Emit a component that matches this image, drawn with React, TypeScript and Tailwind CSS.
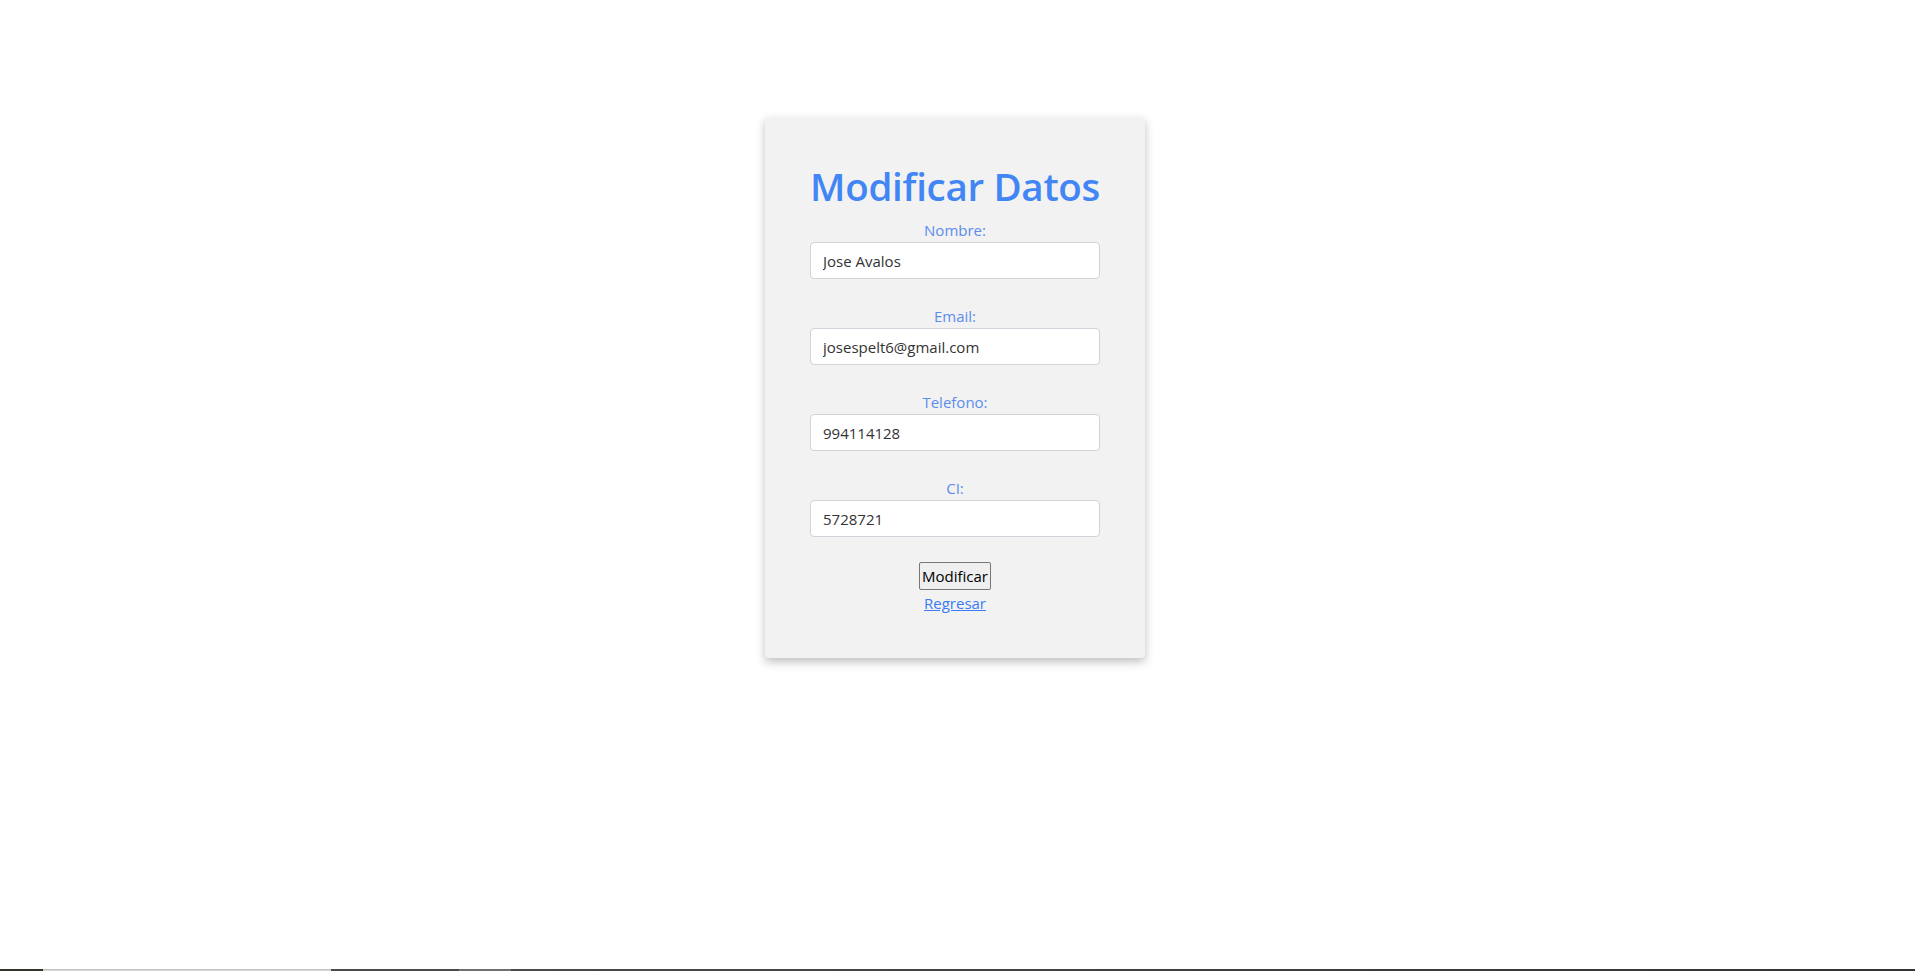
import { useState } from 'react';

const fields = [
  { id: 'nombre', label: 'Nombre:', value: 'Jose Avalos' },
  { id: 'email', label: 'Email:', value: 'josespelt6@gmail.com' },
  { id: 'telefono', label: 'Telefono:', value: '994114128' },
  { id: 'ci', label: 'CI:', value: '5728721' },
];

export default function App() {
  const [values, setValues] = useState<Record<string, string>>(
    Object.fromEntries(fields.map((f) => [f.id, f.value]))
  );

  return (
    <div className="min-h-screen flex flex-col bg-white font-['Open_Sans',sans-serif]">
      <div className="flex-1 flex justify-center pt-[117px] pr-[5px]">
        <form
          className="w-[380px] h-[541px] bg-[#f2f2f2] rounded-[4px] shadow-[0_4px_10px_rgba(0,0,0,0.25)] pt-[45px] flex flex-col items-center"
          onSubmit={(e) => e.preventDefault()}
        >
          <h1 className="text-[38.5px] leading-[48px] font-semibold text-[#4285f4] tracking-[-0.3px] mb-[9px]">
            Modificar Datos
          </h1>

          {fields.map((f) => (
            <div key={f.id} className="flex flex-col items-center mb-[26px]">
              <label htmlFor={f.id} className="text-[15px] leading-[22px] text-[#5b8def] mb-[1px]">
                {f.label}
              </label>
              <input
                id={f.id}
                value={values[f.id]}
                onChange={(e) => setValues({ ...values, [f.id]: e.target.value })}
                className="w-[290px] h-[37px] bg-white border border-[#cfd4db] rounded-[4px] px-[12px] text-[15px] text-[#333] outline-none"
              />
            </div>
          ))}

          <button
            type="submit"
            className="h-[28px] px-[2px] mt-[-1px] bg-[#efefef] border border-[#767676] rounded-[2px] text-[15px] text-black font-['Open_Sans',sans-serif]"
          >
            Modificar
          </button>
          <a href="#" className="mt-[2px] text-[15px] leading-[22px] text-[#3b7cf6] underline">
            Regresar
          </a>
        </form>
      </div>

      {/* taskbar edge */}
      <div className="h-[2px] flex">
        <div className="w-[43px] bg-[#33332a]" />
        <div className="w-[288px] bg-[#d6d6d6] border-t border-[#c4c4c4]" />
        <div className="w-[128px] bg-[#4a4a4a]" />
        <div className="w-[52px] bg-[#707070]" />
        <div className="flex-1 bg-gradient-to-r from-[#4a4a4a] to-[#333333]" />
      </div>
    </div>
  );
}
